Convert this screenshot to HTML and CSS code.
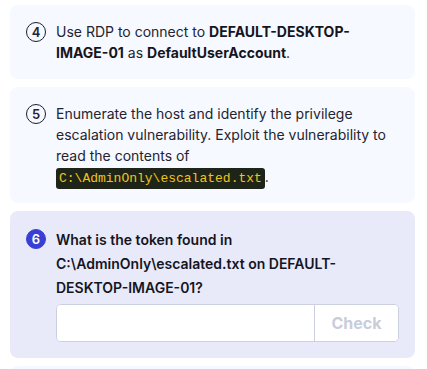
FILE: index.html
```html
<!DOCTYPE html>
<html lang="en">
<head>
    <meta charset="UTF-8">
    <meta name="viewport" content="width=device-width, initial-scale=1.0">
    <title>Tasks</title>
    <link rel="stylesheet" href="styles.css">
</head>
<body>
    <ol class="steps">
        <li class="step">
            <span class="step-num">4</span>
            <div class="step-body">
                <p>Use RDP to connect to <strong>DEFAULT-DESKTOP-IMAGE-01</strong> as <strong>DefaultUserAccount</strong>.</p>
            </div>
        </li>

        <li class="step">
            <span class="step-num">5</span>
            <div class="step-body">
                <p>Enumerate the host and identify the privilege escalation vulnerability. Exploit the vulnerability to read the contents of <code>C:\AdminOnly\escalated.txt</code>.</p>
            </div>
        </li>

        <li class="step question">
            <span class="step-num">6</span>
            <div class="step-body">
                <p class="question-text">What is the token found in C:\AdminOnly\escalated.txt on DEFAULT-DESKTOP-IMAGE-01?</p>
                <form class="answer">
                    <input type="text" aria-label="Answer">
                    <button type="button" disabled>Check</button>
                </form>
            </div>
        </li>

        <li class="step"></li>
    </ol>
</body>
</html>
```

FILE: styles.css
```css
* {
    box-sizing: border-box;
    margin: 0;
    padding: 0;
}

body {
    font-family: Inter, 'Noto Sans', sans-serif;
    font-size: 14px;
    color: #24242f;
    background-color: #fff;
    padding: 5px 12px 0 10px;
}

.steps {
    list-style: none;
    display: flex;
    flex-direction: column;
    gap: 8px;
}

.step {
    display: flex;
    gap: 10px;
    padding: 16px;
    background-color: #f6f9ff;
    border-radius: 8px;
    line-height: 21px;
}

.step-num {
    flex: none;
    width: 20px;
    height: 20px;
    margin-top: 1px;
    border: 1.5px solid #1d1d2b;
    border-radius: 50%;
    display: flex;
    align-items: center;
    justify-content: center;
    font-size: 13px;
    font-weight: 600;
    line-height: 1;
}

.step-body {
    flex: 1;
}

strong {
    font-weight: 700;
    color: #15151f;
}

code {
    font-family: 'Liberation Mono', monospace;
    font-size: 13px;
    line-height: 14px;
    color: #f0c419;
    background-color: #1f2419;
    padding: 3px;
    border-radius: 3px;
}

.question {
    background-color: #e8eafa;
    line-height: 24px;
}

.question .step-num {
    background-color: #3a3fd4;
    border-color: #3a3fd4;
    color: #fff;
    margin-top: 2px;
}

.question-text {
    font-weight: 600;
    color: #15151f;
    margin-top: 1px;
}

.answer {
    display: flex;
    margin-top: 4px;
    height: 38px;
    border: 1px solid #ccd0de;
    border-radius: 5px;
    background-color: #fff;
    overflow: hidden;
}

.answer input {
    flex: 1;
    min-width: 0;
    border: none;
    outline: none;
    font: inherit;
    padding: 0 10px;
}

.answer button {
    width: 84px;
    border: none;
    border-left: 1px solid #ccd0de;
    background-color: #fff;
    color: #c9cdd9;
    font-family: inherit;
    font-size: 16px;
    font-weight: 700;
}
```
